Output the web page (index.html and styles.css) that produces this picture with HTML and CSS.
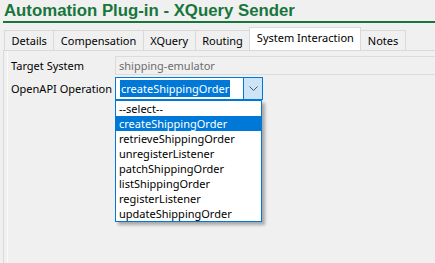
FILE: index.html
```html
<!DOCTYPE html>
<html>
<head>
<meta charset="utf-8">
<link rel="stylesheet" href="styles.css">
</head>
<body>
<div class="page">
  <div class="title">Automation Plug-in - XQuery Sender</div>
  <div class="tabs">
    <div class="tab">Details</div>
    <div class="tab">Compensation</div>
    <div class="tab">XQuery</div>
    <div class="tab">Routing</div>
    <div class="tab active">System Interaction</div>
    <div class="tab">Notes</div>
  </div>
  <div class="panel">
    <div class="row">
      <div class="label">Target System</div>
      <div class="readonly">shipping-emulator</div>
    </div>
    <div class="row row2">
      <div class="label">OpenAPI Operation</div>
      <div class="combo">
        <div class="combo-text"><span class="sel">createShippingOrder</span></div>
        <div class="combo-btn">
          <svg width="9" height="5" viewBox="0 0 9 5"><path d="M0.5 0.5 L4.5 4.5 L8.5 0.5" fill="none" stroke="#555" stroke-width="1"/></svg>
        </div>
        <ul class="list">
          <li>--select--</li>
          <li class="hl">createShippingOrder</li>
          <li>retrieveShippingOrder</li>
          <li>unregisterListener</li>
          <li>patchShippingOrder</li>
          <li>listShippingOrder</li>
          <li>registerListener</li>
          <li>updateShippingOrder</li>
        </ul>
      </div>
    </div>
  </div>
</div>
</body>
</html>
```

FILE: styles.css
```css
html, body {
  margin: 0;
  padding: 0;
  background: #f0f0f0;
}
.page {
  width: 435px;
  height: 263px;
  overflow: hidden;
  display: flex;
  flex-direction: column;
  font-family: "Noto Sans", "Open Sans", sans-serif;
  font-size: 11px;
  color: #000;
}
.title {
  margin-left: 3px;
  padding-left: 1px;
  height: 21px;
  line-height: 21px;
  font-family: "Liberation Sans", Arial, sans-serif;
  font-weight: bold;
  font-size: 16.8px;
  color: #17763b;
  border-bottom: 2px solid #17763b;
}
.tabs {
  display: flex;
  align-items: flex-end;
  margin-top: 5px;
  padding-left: 4px;
  height: 22px;
}
.tab {
  height: 20px;
  line-height: 19px;
  padding: 0 6.5px;
  background: #f0f0f0;
  border: 1px solid #d9d9d9;
  border-bottom: none;
  border-right: none;
  box-sizing: border-box;
  white-space: nowrap;
}
.tab:last-child {
  border-right: 1px solid #d9d9d9;
}
.tab.active {
  background: #fff;
  height: 23px;
  line-height: 20px;
  border-right: 1px solid #d9d9d9;
  margin-right: -1px;
  position: relative;
}
.panel {
  flex: 1;
  margin-left: 3px;
  border-top: 1px solid #d9d9d9;
  border-left: 1px solid #dadada;
  box-shadow: inset 3px 0 0 #f0f0f0, inset 4px 0 0 #fafafa;
  padding: 5px 0 0 7px;
}
.row {
  display: flex;
  align-items: center;
}
.label {
  width: 104px;
  flex-shrink: 0;
  white-space: nowrap;
}
.readonly {
  flex: 1;
  height: 19px;
  line-height: 17px;
  border: 1px solid #dcdcdc;
  border-right: none;
  padding-left: 3px;
  color: #6d6d6d;
  box-sizing: border-box;
}
.row2 {
  margin-top: 2px;
}
.combo {
  position: relative;
  flex-shrink: 0;
  width: 148px;
  height: 23px;
  border: 1px solid #0078d7;
  box-sizing: border-box;
  display: flex;
  background: #fff;
}
.combo-text {
  flex: 1;
  padding: 2px 0 2px 4px;
}
.sel {
  display: inline-block;
  height: 17px;
  line-height: 17px;
  background: #0078d7;
  color: #fff;
  padding: 0 1px;
  white-space: nowrap;
}
.combo-btn {
  width: 18px;
  background: #cce4f7;
  border-left: 1px solid #0078d7;
  display: flex;
  align-items: center;
  justify-content: center;
}
.list {
  position: absolute;
  left: -1px;
  top: 22px;
  width: 147px;
  margin: 0;
  padding: 0;
  list-style: none;
  background: #fff;
  border: 1px solid #0078d7;
  box-sizing: border-box;
  box-shadow: 3px 3px 3px rgba(0,0,0,0.3);
}
.list li {
  height: 15px;
  line-height: 15px;
  padding-left: 3px;
  white-space: nowrap;
}
.list li.hl {
  background: #0078d7;
  color: #fff;
}
```
